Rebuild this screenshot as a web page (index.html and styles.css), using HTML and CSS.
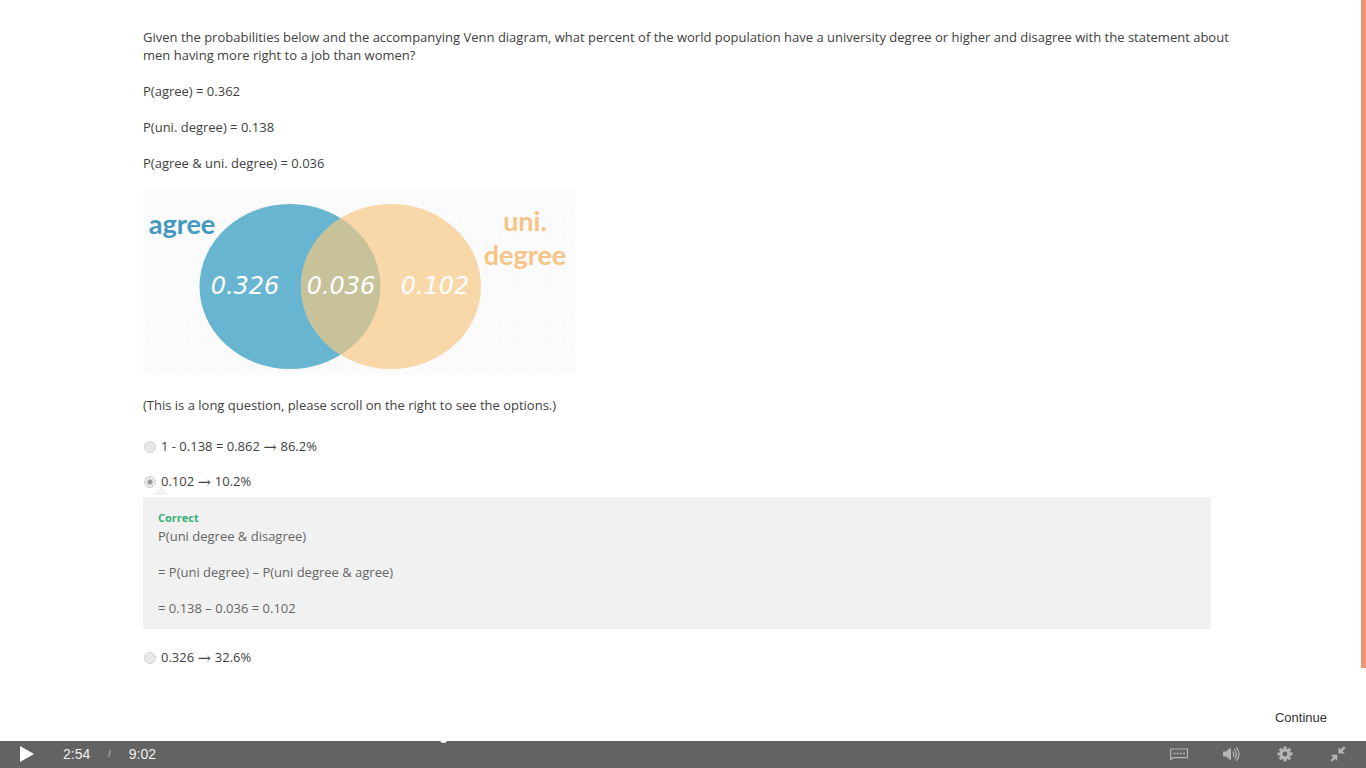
FILE: index.html
```html
<!DOCTYPE html>
<html lang="en">
<head>
<meta charset="utf-8">
<title>Quiz: Venn diagram</title>
<link rel="stylesheet" href="styles.css">
</head>
<body>
<div class="stage">
  <main class="quiz">
    <p>Given the probabilities below and the accompanying Venn diagram, what percent of the world population have a university degree or higher and disagree with the statement about men having more right to a job than women?</p>
    <p>P(agree) = 0.362</p>
    <p>P(uni. degree) = 0.138</p>
    <p>P(agree &amp; uni. degree) = 0.036</p>
    <svg class="venn" viewBox="0 0 432 184" role="img" aria-label="Venn diagram of agree and university degree">
      <defs>
        <pattern id="grid" width="13" height="13" patternUnits="userSpaceOnUse">
          <path d="M5.500 0V13M0 5.500H13" stroke="#f6f8f9" fill="none"/>
        </pattern>
      </defs>
      <rect width="432" height="184" fill="#fbfbfb"/>
      <rect width="432" height="184" fill="url(#grid)"/>
      <ellipse cx="147" cy="96.500" rx="90.500" ry="82.500" fill="#67b5d0"/>
      <ellipse cx="248" cy="96.500" rx="90" ry="82.500" fill="#f8d7a8"/>
      <path d="M197.500 28.100A90 82.500 0 0 0 197.500 164.900A90.500 82.500 0 0 0 197.500 28.100Z" fill="#c8c29a"/>
      <g class="venn-label">
        <text x="39" y="44" fill="#4399bf">agree</text>
        <text x="382" y="41" fill="#f5c587">uni.</text>
        <text x="382" y="75" fill="#f5c587">degree</text>
      </g>
      <g class="venn-value">
        <text x="102" y="104">0.326</text>
        <text x="198" y="104">0.036</text>
        <text x="292" y="104">0.102</text>
      </g>
    </svg>
    <p>(This is a long question, please scroll on the right to see the options.)</p>
    <form class="options">
      <label class="option"><input type="radio" name="answer"><span>1 - 0.138 = 0.862 <span class="arrow">→</span> 86.2%</span></label>
      <label class="option"><input type="radio" name="answer" checked><span>0.102 <span class="arrow">→</span> 10.2%</span></label>
      <div class="feedback">
        <strong>Correct</strong>
        <p>P(uni degree &amp; disagree)</p>
        <p>= P(uni degree) – P(uni degree &amp; agree)</p>
        <p>= 0.138 – 0.036 = 0.102</p>
      </div>
      <label class="option"><input type="radio" name="answer"><span>0.326 <span class="arrow">→</span> 32.6%</span></label>
    </form>
  </main>
  <div class="scrollbar"></div>
</div>
<div class="actions"><button type="button" class="continue">Continue</button></div>
<footer class="player">
  <button type="button" class="icon play" aria-label="Play"><svg width="16" height="16" viewBox="0 0 16 16"><path d="M1 0L15 8L1 16Z" fill="#fff"/></svg></button>
  <div class="time"><span>2:54</span><span class="slash">/</span><span>9:02</span></div>
  <span class="handle"></span>
  <div class="controls">
    <button type="button" class="icon" aria-label="Subtitles"><svg width="20" height="16" viewBox="0 0 20 16"><path d="M1.700 13.500V3H18.500V11.700H4.200Z" fill="none" stroke="#b4b4b4" stroke-width="1.200"/><path d="M4.500 7.500H16" stroke="#b4b4b4" stroke-width="1.500" stroke-dasharray="2 1.200"/></svg></button>
    <button type="button" class="icon" aria-label="Volume"><svg width="20" height="16" viewBox="0 0 20 16"><path d="M1 5.500H4L9 1.500V14.500L4 10.500H1Z" fill="#b4b4b4"/><path d="M10.800 5.500Q13 8 10.800 10.500M12.500 3.200Q16.200 8 12.500 12.800M14.300 1.200Q19.700 8 14.300 14.800" fill="none" stroke="#b4b4b4" stroke-width="1.300"/></svg></button>
    <button type="button" class="icon" aria-label="Settings"><svg width="20" height="16" viewBox="0 0 20 16"><g fill="none" stroke="#b4b4b4"><circle cx="10" cy="8" r="4" stroke-width="3.200"/><path d="M10 .5V3M10 13V15.500M2.500 8H5M15 8H17.500M4.700 2.700L6.500 4.500M13.500 11.500L15.300 13.300M15.300 2.700L13.500 4.500M6.500 11.500L4.700 13.300" stroke-width="3"/></g></svg></button>
    <button type="button" class="icon" aria-label="Exit full screen"><svg width="20" height="16" viewBox="0 0 20 16"><g fill="#b4b4b4"><path d="M10.500 7.500V1L12.700 3.200L15.900 .3L17.500 1.900L14.500 5L17 7.500Z"/><path d="M9.200 8.800V15L7.100 12.900L4 15.800L2.400 14.200L5.300 11.200L3 8.800Z"/></g></svg></button>
  </div>
</footer>
</body>
</html>
```

FILE: styles.css
```css
* { box-sizing: border-box; }
body {
  margin: 0;
  min-height: 100vh;
  display: flex;
  flex-direction: column;
  background: #fff;
  color: #414141;
  font: 13px/18px "Open Sans", sans-serif;
}
p { margin: 0; }
.stage { flex: 1; display: flex; }
.quiz {
  flex: 1;
  display: flex;
  flex-direction: column;
  align-items: stretch;
  gap: 18px;
  padding: 28px 120px 0 143px;
}
.scrollbar { width: 5px; background: #ee9471; }
.venn { width: 432px; max-width: 100%; margin-bottom: 4px; }
.venn-label {
  font: bold 27px "Lato", sans-serif;
  text-anchor: middle;
}
.venn-value {
  font: italic 24px "DejaVu Sans", sans-serif;
  text-anchor: middle;
  fill: #fff;
}
.options {
  display: flex;
  flex-direction: column;
  margin: 5px 30px 0 0;
}
.option {
  display: flex;
  align-items: center;
  gap: 4px;
  height: 18px;
  margin-bottom: 17px;
}
.option:last-child { margin-bottom: 0; }
.option input {
  appearance: none;
  width: 12px;
  height: 12px;
  margin: 2px 1px 0;
  border: 1px solid #d2d2d2;
  border-radius: 50%;
  background: #e8e8e8;
}
.option input:checked {
  background: radial-gradient(circle, #999 2px, #e8e8e8 3px);
}
.arrow { font: 14px/1 "DejaVu Math TeX Gyre", "Liberation Serif", serif; }
.feedback {
  position: relative;
  margin: -10px 0 19px;
  padding: 12px 15px;
  background: #f1f1f1;
  color: #666;
}
.feedback::before {
  content: "";
  position: absolute;
  left: 10px;
  top: -10px;
  border: solid transparent;
  border-width: 0 8px 8px;
  border-bottom-color: #f1f1f1;
}
.feedback strong {
  display: block;
  color: #36b276;
  font-size: 11px;
}
.feedback p + p { margin-top: 18px; }
.actions {
  display: flex;
  justify-content: flex-end;
  height: 73px;
  padding: 41px 39px 0 0;
}
button {
  padding: 0;
  border: 0;
  background: none;
  cursor: pointer;
}
.continue {
  height: 18px;
  color: #333;
  font: 13px/18px "Liberation Sans", sans-serif;
}
.player {
  position: relative;
  display: flex;
  align-items: center;
  height: 27px;
  padding: 0 18px 1px 19px;
  background: #636363;
  color: #f0f0f0;
  font: 14px/18px "Liberation Sans", sans-serif;
}
.icon { display: flex; }
.time {
  display: flex;
  align-items: center;
  gap: 18px;
  margin-left: 28px;
}
.slash { font-size: 9px; color: #ccc; }
.handle {
  position: absolute;
  left: 440px;
  top: -5px;
  width: 7px;
  height: 7px;
  border-radius: 50%;
  background: #fff;
}
.controls {
  display: flex;
  gap: 33px;
  margin-left: auto;
}
```
